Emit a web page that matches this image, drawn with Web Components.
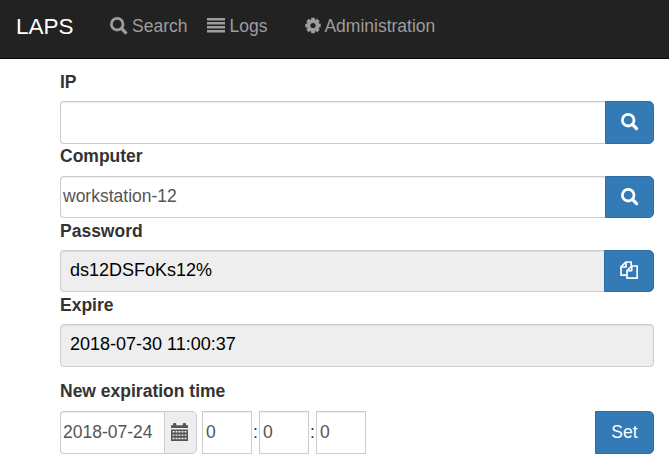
<!DOCTYPE html>
<html lang="en"><head><meta charset="utf-8"><title>LAPS</title>
<style>body{margin:0;background:#fff;font:17.5px/25px "Liberation Sans",Arial,sans-serif;color:#333}</style>
</head><body><laps-app></laps-app>
<script>
const tooth='M7.3 .8h3.4l.5 2.8H6.8z';
const icons={
search:'<circle cx="7.2" cy="7.2" r="5.8" fill="none" stroke="currentColor" stroke-width="2.8"/><path d="M11.7 11.7l3.9 3.9" stroke="currentColor" stroke-width="3.3" stroke-linecap="round"/>',
list:'<path d="M0 1h18v2.5H0zM0 5h18v2.5H0zM0 9h18v2.5H0zM0 13h18v2.5H0z" fill="currentColor"/>',
cog:'<g fill="currentColor"><path fill-rule="evenodd" d="M9 2.5a6 6 0 1 0 0 12a6 6 0 1 0 0-12zM9 5.9a2.6 2.6 0 1 1 0 5.2a2.6 2.6 0 1 1 0-5.2z"/>'+[0,45,90,135,180,225,270,315].map(a=>`<path d="${tooth}" transform="rotate(${a} 9 8.5)"/>`).join('')+'</g>',
copy:'<path d="M6.4 14.2H1V5.8L5.8 1h5.4v3.4M1 6h5V1M11.7 5h5.5v12.2H7V9.6zM7 9.6h4.7V5" fill="none" stroke="currentColor" stroke-width="1.7" stroke-linejoin="round"/>',
calendar:'<path fill="currentColor" fill-rule="evenodd" d="M0 2.2h2V1q0-1 1-1h1.2q1 0 1 1v1.2h6.6V1q0-1 1-1H14q1 0 1 1v1.2h2V5H0zM0 6.5h17V18H0zM1.5 8v1.4h2V8zM4.5 8v1.4h2V8zM7.5 8v1.4h2V8zM10.5 8v1.4h2V8zM13.5 8v1.4h2V8zM1.5 11.4v1.4h2v-1.4zM4.5 11.4v1.4h2v-1.4zM7.5 11.4v1.4h2v-1.4zM10.5 11.4v1.4h2v-1.4zM13.5 11.4v1.4h2v-1.4zM1.5 14.8v1.4h2v-1.4zM4.5 14.8v1.4h2v-1.4zM7.5 14.8v1.4h2v-1.4zM10.5 14.8v1.4h2v-1.4zM13.5 14.8v1.4h2v-1.4z"/>'};
const define=(name,html)=>customElements.define(name,class extends HTMLElement{
 constructor(){super();this.attachShadow({mode:'open'}).innerHTML=html}});
customElements.define('laps-icon',class extends HTMLElement{
 constructor(){super();this.attachShadow({mode:'open'})}
 connectedCallback(){this.shadowRoot.innerHTML='<style>:host{display:block;width:18px;height:18px;flex:none}svg{display:block}</style><svg width="18" height="18" viewBox="0 0 18 18">'+icons[this.getAttribute('name')]+'</svg>'}});
define('nav-link','<style>:host{display:flex;align-items:center;color:#9d9d9d;gap:4px;white-space:nowrap}span{padding-top:2px}</style><slot name="icon"></slot><span><slot></slot></span>');
define('laps-nav',`<style>:host{display:flex;box-sizing:border-box;height:59px;background:#222;border-bottom:1px solid #080808;padding:0 0 7px 16px;align-items:center}
.brand{font-size:22.5px;color:#fff;width:94px;padding-top:1px}nav{display:flex}nav-link:nth-child(2){margin-left:20px}nav-link:nth-child(3){margin-left:37px;gap:2px}</style>
<span class="brand">LAPS</span><nav><nav-link><laps-icon slot="icon" name="search"></laps-icon>Search</nav-link><nav-link><laps-icon slot="icon" name="list"></laps-icon>Logs</nav-link><nav-link><laps-icon slot="icon" name="cog"></laps-icon>Administration</nav-link></nav>`);
define('form-label','<style>:host{display:block;font-weight:700;white-space:nowrap}</style><slot></slot>');
define('form-row','<style>:host{display:flex;min-height:0;align-items:stretch}</style><slot></slot>');
define('text-box',`<style>:host{display:flex;box-sizing:border-box;flex:1;min-width:0;align-items:center;border:1px solid #ccc;border-radius:4px;box-shadow:inset 0 1px 1px rgba(0,0,0,.075);background:#fff;color:#555;padding:0 0 1px 2px;white-space:nowrap}
:host([joined]){border-radius:4px 0 0 4px;border-right:0}:host([readonly]){background:#eee;color:#000;padding:0 0 2px 9px;font-size:18px}
:host([square]){border-radius:0;flex:none;width:50px;padding-left:3px}:host([date]){flex:none;width:104px}</style><slot></slot>`);
define('action-button',`<style>:host{display:flex;box-sizing:border-box;width:49px;flex:none;align-items:center;justify-content:center;background:#337ab7;border:1px solid #2e6da4;border-radius:0 5px 5px 0;color:#fff;padding-bottom:1px}
:host([wide]){width:50px;padding:0 1px 2px 0}:host([set]){width:59px;margin-left:auto}:host([addon]){width:33px;background:#eee;border-color:#ccc;color:#555;padding:0 1px 2px 0}</style><slot></slot>`);
define('laps-app',`<style>:host{display:block}main{display:grid;box-sizing:border-box;width:594px;margin-left:60px;padding-top:11px;grid-template-rows:31px 43px 32px 42px 32px 42px 32px 43px 44px 43px}
.low{padding-top:1px}.last{padding-top:12px}.c{width:7px;box-sizing:border-box;padding-left:1px;align-self:center;padding-bottom:1px}</style>
<laps-nav></laps-nav><main>
<form-label>IP</form-label><form-row><text-box joined></text-box><action-button><laps-icon name="search"></laps-icon></action-button></form-row>
<form-label>Computer</form-label><form-row><text-box joined>workstation-12</text-box><action-button><laps-icon name="search"></laps-icon></action-button></form-row>
<form-label class="low">Password</form-label><form-row><text-box joined readonly>ds12DSFoKs12%</text-box><action-button wide><laps-icon name="copy"></laps-icon></action-button></form-row>
<form-label class="low">Expire</form-label><form-row><text-box readonly>2018-07-30 11:00:37</text-box></form-row>
<form-label class="last">New expiration time</form-label><form-row><text-box date joined>2018-07-24</text-box><action-button addon><laps-icon name="calendar"></laps-icon></action-button>
<text-box square style="margin-left:5px">0</text-box><span class="c">:</span><text-box square>0</text-box><span class="c">:</span><text-box square>0</text-box><action-button set>Set</action-button></form-row>
</main>`);
</script></body></html>
